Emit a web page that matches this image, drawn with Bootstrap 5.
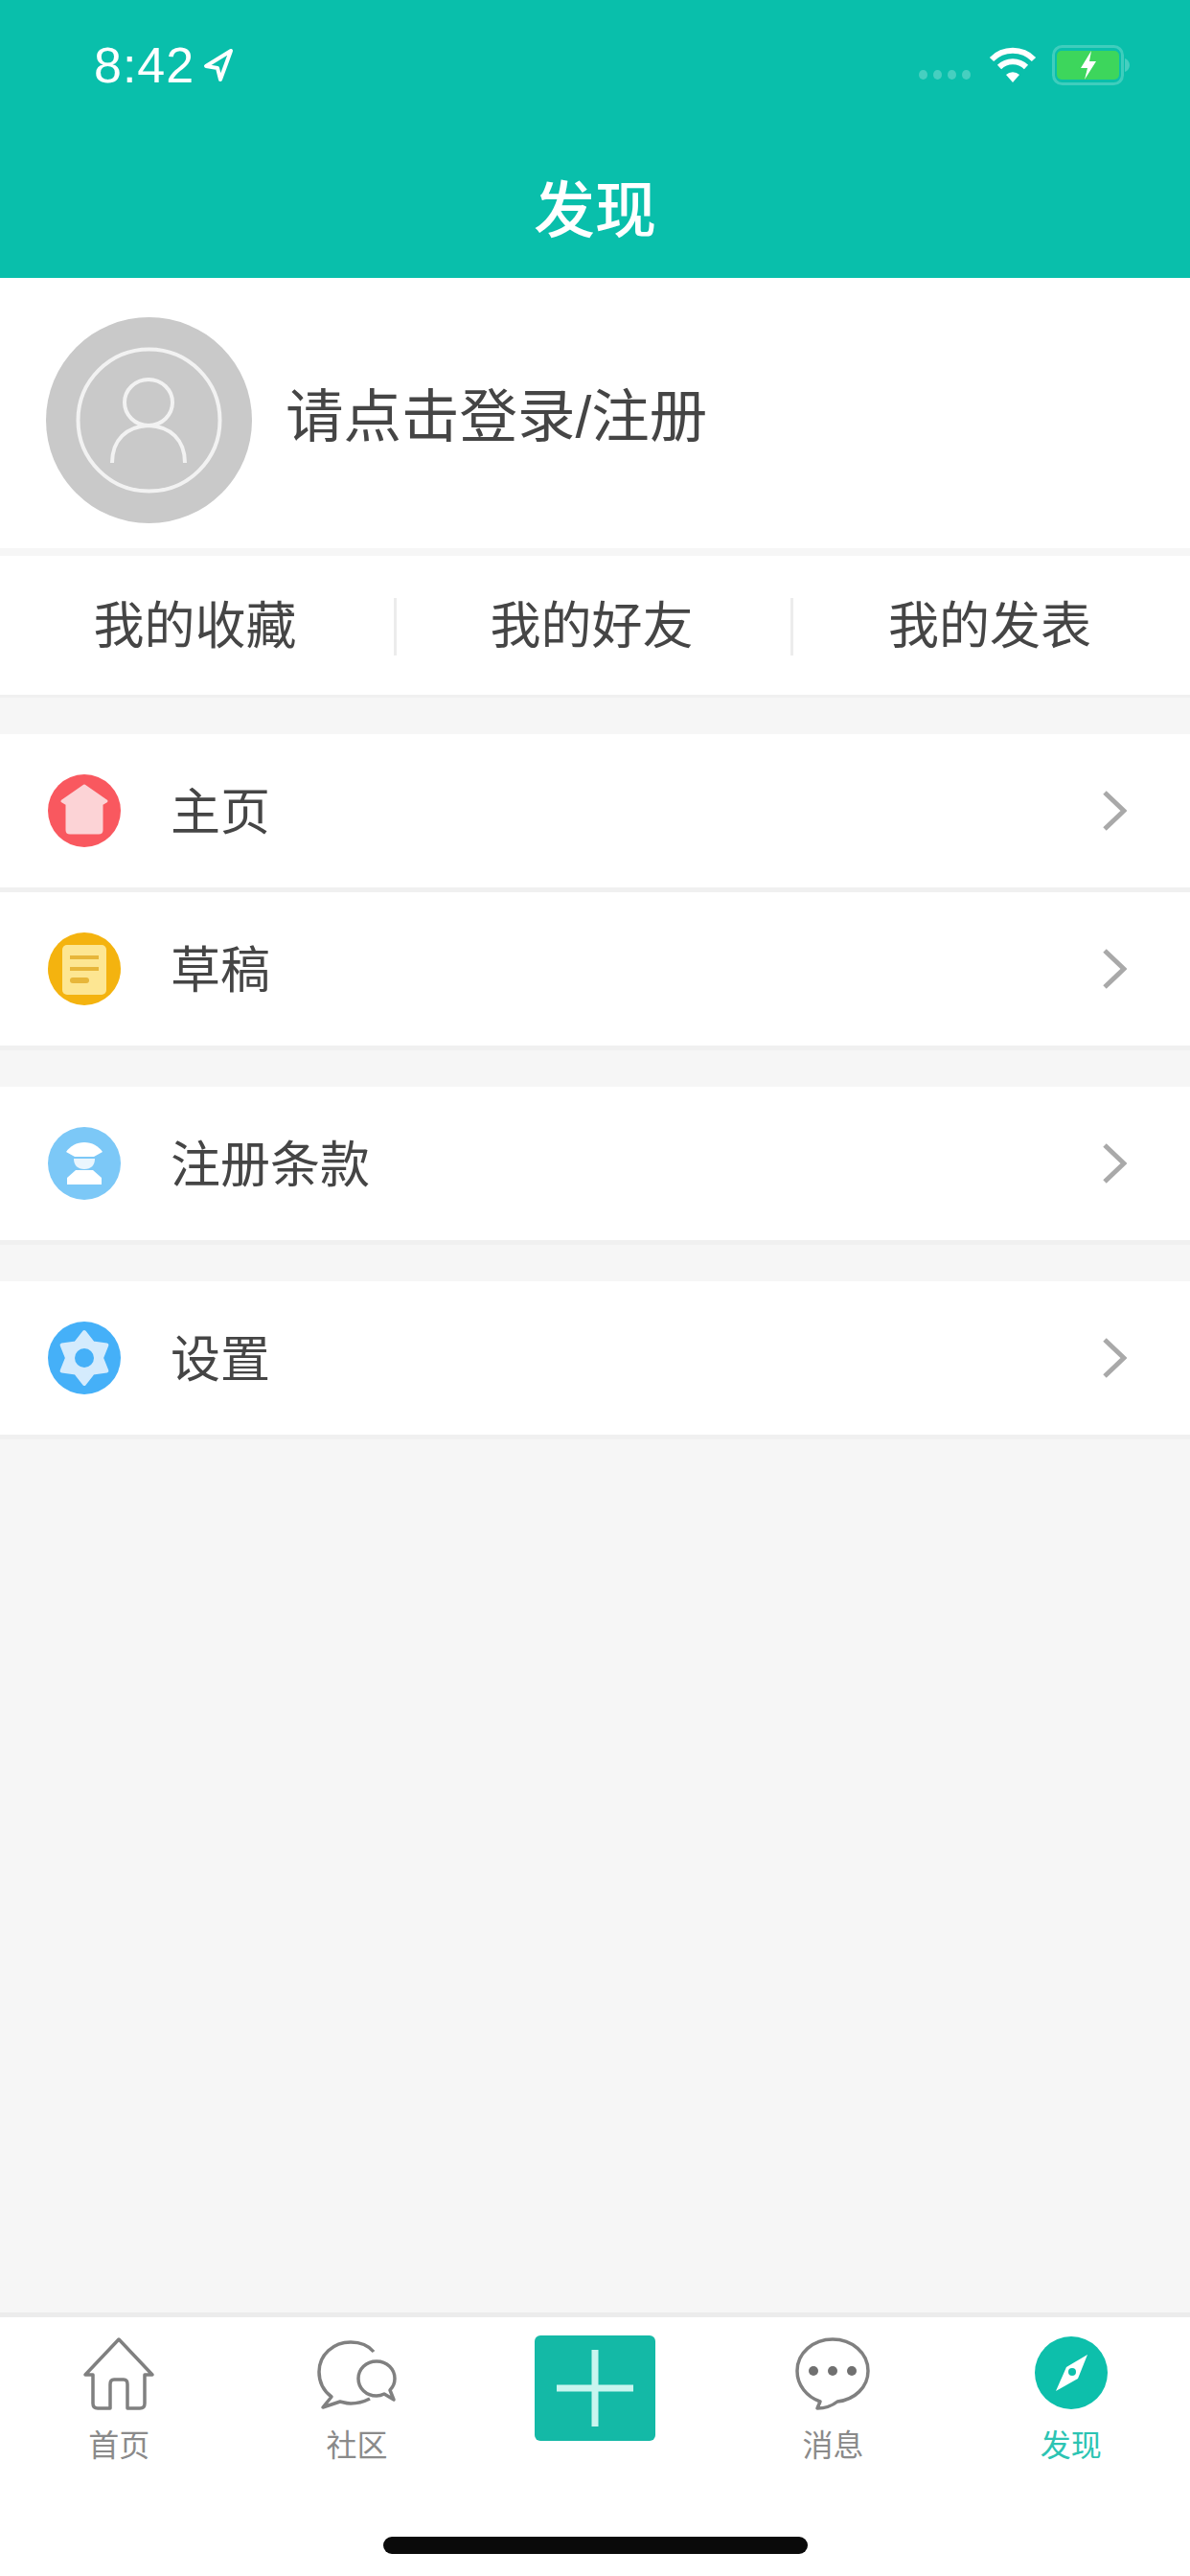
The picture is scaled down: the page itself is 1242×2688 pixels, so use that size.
<!DOCTYPE html>
<html lang="zh-CN">
<head>
  <meta charset="UTF-8">
  <meta name="viewport" content="width=device-width, initial-scale=1.0">
  <title>发现</title>
  <link href="https://cdn.jsdelivr.net/npm/bootstrap@5.3.0/dist/css/bootstrap.min.css" rel="stylesheet">
  <style>
    body {
      font-family: "Liberation Sans", "Noto Sans CJK SC", sans-serif;
      background-color: #f6f6f6;
      color: #454545;
      height: 2688px;
      overflow: hidden;
    }
    .app-header {
      background-color: #09bfab;
      height: 290px;
      color: #fff;
    }
    .status-row {
      height: 136px;
      padding: 0 62px 0 98px;
    }
    .status-time {
      font-size: 52px;
      line-height: 1;
      letter-spacing: 1px;
    }
    .signal-dots {
      width: 55px;
      gap: 6px;
      margin-top: 20px;
      margin-right: 18px;
    }
    .signal-dots i {
      width: 9px;
      height: 10px;
      border-radius: 50%;
      background-color: rgba(255, 255, 255, .25);
    }
    .page-title {
      height: 154px;
      padding-top: 14px;
      font-size: 64px;
      font-weight: 500;
      line-height: 1;
    }
    .profile-box {
      height: 282px;
      padding: 14px 0 0 48px;
      gap: 35px;
      background-color: #fff;
    }
    .profile-name {
      font-size: 60.5px;
      margin-top: -6px;
    }
    .shortcut-row {
      margin-top: 8px;
      height: 148px;
      background-color: #fff;
      border-bottom: 3px solid #f0f0f0;
    }
    .shortcut-cell {
      height: 60px;
      line-height: 60px;
      margin-top: 2px;
      padding-right: 4px;
      font-size: 53px;
      border-right: 3px solid #ececec;
    }
    .shortcut-cell:last-child {
      border-right: 0;
    }
    .menu-list {
      border-radius: 0;
      margin-bottom: 38px;
    }
    .menu-list.list-group-flush > .menu-row,
    .menu-list.list-group-flush > .menu-row:last-child {
      height: 165px;
      padding: 0 66px 0 50px;
      gap: 52px;
      background-color: #fff;
      color: #454545;
      font-size: 52px;
      border-width: 0 0 5px;
      border-color: #f0f0f0;
    }
    .menu-label {
      margin-top: 4px;
    }
    .first-menu {
      margin-top: 38px;
    }
    .menu-icon {
      width: 76px;
      height: 76px;
      flex-shrink: 0;
    }
    .tab-footer {
      height: 275px;
      background-color: #fff;
      border-top: 5px solid #ececec;
    }
    .tab-cell {
      flex: 1 1 0;
      padding-top: 19px;
      font-size: 32px;
      line-height: 32px;
      color: #8a8a8a;
    }
    .tab-cell svg {
      height: 78px;
      display: block;
      margin: 0 auto 21px;
    }
    .tab-active {
      color: #2cc4b3;
    }
    .plus-btn {
      width: 126px;
      height: 110px;
      padding: 0;
      background-color: #14b9a6;
      border: 0;
      border-radius: 6px;
    }
    .plus-btn svg {
      width: 80px;
      height: 80px;
      margin: 0 auto;
    }
    .home-bar {
      width: 443px;
      height: 18px;
      margin-bottom: 23px;
      background-color: #0a0a0a;
      border-radius: 9px;
    }
  </style>
</head>
<body class="d-flex flex-column">
  <header class="app-header">
    <div class="status-row d-flex align-items-center">
      <span class="status-time">8:42</span>
      <svg class="ms-2" width="34" height="36" viewBox="0 0 34 36">
        <path d="M30 3 4 19l12 2 3 12z" fill="none" stroke="#fff" stroke-width="4" stroke-linejoin="round"/>
      </svg>
      <div class="d-flex align-items-center ms-auto">
        <div class="signal-dots d-flex"><i></i><i></i><i></i><i></i></div>
        <svg width="50" height="40" viewBox="0 0 50 40">
          <path d="M3 14a31 31 0 0 1 44 0" fill="none" stroke="#fff" stroke-width="6"/>
          <path d="M11 22a20 20 0 0 1 28 0" fill="none" stroke="#fff" stroke-width="6"/>
          <path d="M18 30a10 10 0 0 1 14 0l-7 8z" fill="#fff"/>
        </svg>
        <svg class="ms-3" width="82" height="42" viewBox="0 0 82 42">
          <rect x="1.500" y="1.500" width="72" height="39" rx="9" fill="none" stroke="#fff" stroke-opacity=".22" stroke-width="3"/>
          <path d="M76 14c3 1 5 4 5 7s-2 6-5 7z" fill="#fff" fill-opacity=".25"/>
          <rect x="5" y="6" width="65" height="30" rx="5" fill="#3dd65c"/>
          <path d="M41 6 30 24h7l-3 12 12-19h-7z" fill="#fff"/>
        </svg>
      </div>
    </div>
    <div class="page-title d-flex align-items-center justify-content-center">发现</div>
  </header>

  <div class="profile-box d-flex align-items-center">
    <svg width="215" height="215" viewBox="0 0 215 215" class="flex-shrink-0">
      <circle cx="107.500" cy="107.500" r="107.500" fill="#c9c9c9"/>
      <circle cx="107.500" cy="107.500" r="74" fill="none" stroke="#f2f2f2" stroke-width="4"/>
      <ellipse cx="107" cy="89" rx="25" ry="24" fill="none" stroke="#f2f2f2" stroke-width="4"/>
      <path d="M69 152c0-24 15-38 38-39 23 1 38 15 38 39" fill="none" stroke="#f2f2f2" stroke-width="4"/>
    </svg>
    <div class="profile-name">请点击登录/注册</div>
  </div>

  <div class="shortcut-row row g-0 align-items-center text-center">
    <div class="shortcut-cell col-4">我的收藏</div>
    <div class="shortcut-cell col-4">我的好友</div>
    <div class="shortcut-cell col-4">我的发表</div>
  </div>

  <div class="menu-list first-menu list-group list-group-flush">
    <div class="menu-row list-group-item d-flex align-items-center">
      <svg class="menu-icon" viewBox="0 0 76 76">
        <circle cx="38" cy="38" r="38" fill="#f9585f"/>
        <path d="M38 12 61 28l-5 3v27q0 3-3 3H23q-3 0-3-3V31l-5-3z" fill="#fcd3d6" stroke="#fcd3d6" stroke-width="3" stroke-linejoin="round"/>
      </svg>
      <span class="menu-label">主页</span>
      <svg class="ms-auto" width="26" height="44" viewBox="0 0 26 44">
        <path d="M3 3 23 22 3 41" fill="none" stroke="#a9a9a9" stroke-width="5"/>
      </svg>
    </div>
    <div class="menu-row list-group-item d-flex align-items-center">
      <svg class="menu-icon" viewBox="0 0 76 76">
        <circle cx="38" cy="38" r="38" fill="#f4b30f"/>
        <rect x="15" y="13" width="46" height="52" rx="5" fill="#fde692"/>
        <path d="M23 26h30M23 38h30" stroke="#e7b63a" stroke-width="4"/>
        <path d="M26 50h14" stroke="#e7b63a" stroke-width="6" stroke-linecap="round"/>
      </svg>
      <span class="menu-label">草稿</span>
      <svg class="ms-auto" width="26" height="44" viewBox="0 0 26 44">
        <path d="M3 3 23 22 3 41" fill="none" stroke="#a9a9a9" stroke-width="5"/>
      </svg>
    </div>
  </div>

  <div class="menu-list list-group list-group-flush">
    <div class="menu-row list-group-item d-flex align-items-center">
      <svg class="menu-icon" viewBox="0 0 76 76">
        <circle cx="38" cy="38" r="38" fill="#7cc8f7"/>
        <path d="M38 16c8 0 15 4 19 10l-9 5H28l-9-5c4-6 11-10 19-10z" fill="#fff"/>
        <path d="M27 33h22c0 7-4 11-11 11s-11-4-11-11z" fill="#eaf6fe"/>
        <path d="M29 45h18l9 8v7H20v-7z" fill="#fff"/>
      </svg>
      <span class="menu-label">注册条款</span>
      <svg class="ms-auto" width="26" height="44" viewBox="0 0 26 44">
        <path d="M3 3 23 22 3 41" fill="none" stroke="#a9a9a9" stroke-width="5"/>
      </svg>
    </div>
  </div>

  <div class="menu-list list-group list-group-flush">
    <div class="menu-row list-group-item d-flex align-items-center">
      <svg class="menu-icon" viewBox="0 0 76 76">
        <circle cx="38" cy="38" r="38" fill="#45b0f8"/>
        <path d="M38 11 47 22.400 61.400 24.500 56 38 61.400 51.500 47 53.600 38 65 29 53.600 14.600 51.500 20 38 14.600 24.500 29 22.400z" fill="#d4ebfd" stroke="#d4ebfd" stroke-width="4" stroke-linejoin="round"/>
        <circle cx="38" cy="38" r="10" fill="#45b0f8"/>
      </svg>
      <span class="menu-label">设置</span>
      <svg class="ms-auto" width="26" height="44" viewBox="0 0 26 44">
        <path d="M3 3 23 22 3 41" fill="none" stroke="#a9a9a9" stroke-width="5"/>
      </svg>
    </div>
  </div>

  <footer class="tab-footer mt-auto d-flex flex-column">
    <nav class="d-flex text-center">
      <div class="tab-cell">
        <svg width="76" viewBox="0 0 76 78">
          <path d="M3 41 38 4l35 37h-8v30q0 5-5 5H47V51q0-5-4-5H33q-4 0-4 5v25H16q-5 0-5-5V41z" fill="none" stroke="#808080" stroke-width="3.500" stroke-linejoin="round"/>
        </svg>
        首页
      </div>
      <div class="tab-cell">
        <svg width="86" viewBox="0 0 86 78">
          <path d="M60 17C55 11 46 7 36 7 18 7 3 20 3 38c0 11 5 20 13 26l-9 11 18-6c4 1 7 2 11 2 8 0 14-2 20-5" fill="none" stroke="#808080" stroke-width="3.500" stroke-linejoin="round"/>
          <path d="M63 27c-11 0-19 8-19 18s8 18 19 18c3 0 6-1 8-2l10 6-4-10c3-3 5-7 5-12 0-10-8-18-19-18z" fill="none" stroke="#808080" stroke-width="3.500" stroke-linejoin="round"/>
        </svg>
        社区
      </div>
      <div class="tab-cell">
        <button type="button" class="plus-btn btn d-inline-flex align-items-center justify-content-center">
          <svg viewBox="0 0 80 80">
            <path d="M0 40h80M40 0v80" stroke="#c8f5ef" stroke-width="7"/>
          </svg>
        </button>
      </div>
      <div class="tab-cell">
        <svg width="80" viewBox="0 0 80 78">
          <path d="M40 4C20 4 3 18 3 37c0 15 10 27 24 32l-3 7c9 0 16-3 21-7 18-2 32-15 32-32C77 18 60 4 40 4z" fill="none" stroke="#808080" stroke-width="3.500" stroke-linejoin="round"/>
          <circle cx="20" cy="37" r="5" fill="#707070"/>
          <circle cx="40" cy="37" r="5" fill="#707070"/>
          <circle cx="60" cy="37" r="5" fill="#707070"/>
        </svg>
        消息
      </div>
      <div class="tab-cell tab-active">
        <svg width="78" viewBox="0 0 78 78">
          <circle cx="39" cy="39" r="38" fill="#0dbfab"/>
          <path d="M56 20 46 45 23 58l11-25z" fill="#fff"/>
          <circle cx="40" cy="38" r="4" fill="#0dbfab"/>
        </svg>
        发现
      </div>
    </nav>
    <div class="home-bar mt-auto mx-auto"></div>
  </footer>
</body>
</html>
